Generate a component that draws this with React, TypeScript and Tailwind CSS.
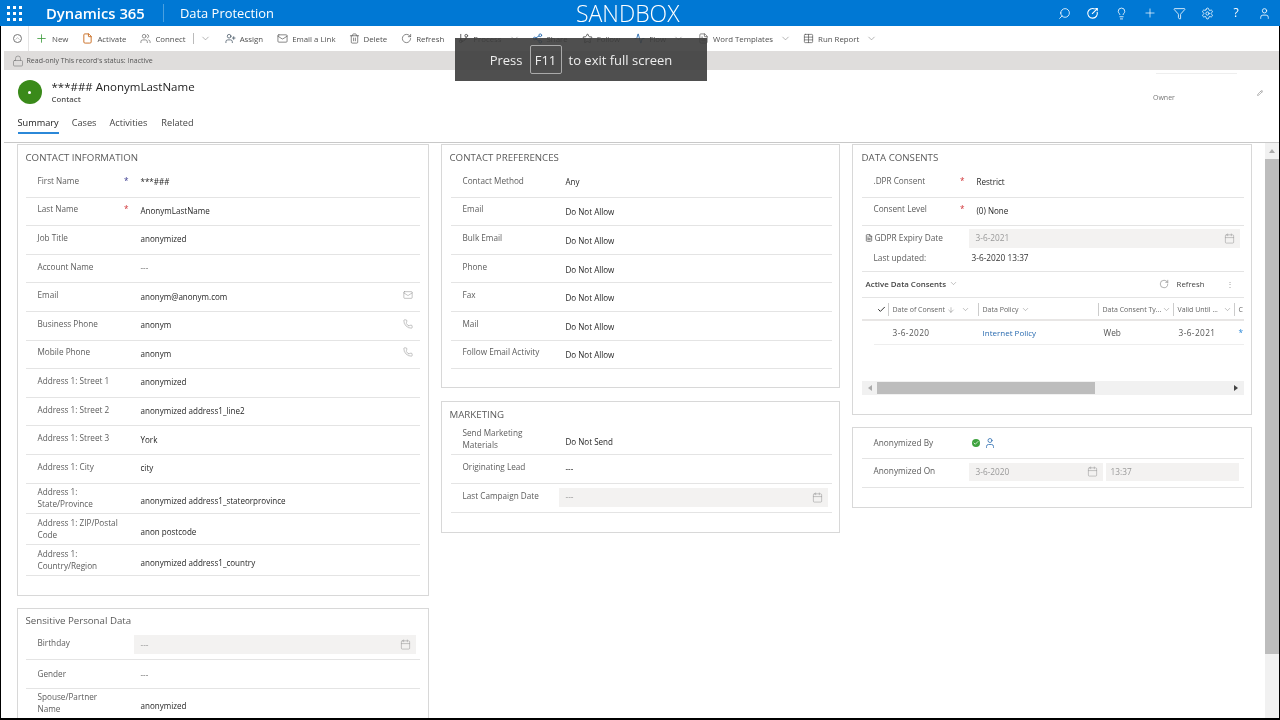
import {
  Activity,
  ArrowDown,
  Calendar,
  Check,
  ChevronDown,
  ChevronUp,
  File,
  FileText,
  Filter,
  GitBranch,
  Lightbulb,
  Lock,
  Mail,
  Pencil,
  Phone,
  Plus,
  RotateCw,
  Search,
  Settings,
  Share2,
  Star,
  Table,
  Trash2,
  User,
  UserPlus,
  Users,
} from "lucide-react";
import type { ReactNode } from "react";

const toolbarItems = [
  { icon: <Plus className="w-[13px] h-[13px] text-[#3b9a3b]" strokeWidth={1.5} />, label: "New", cls: "ml-[6px]" },
  { icon: <File className="w-[11px] h-[11px] text-[#c8691c]" />, label: "Activate", cls: "ml-[14px]" },
  { icon: <Users className="w-[11px] h-[11px] text-[#666]" strokeWidth={1.5} />, label: "Connect", cls: "ml-[14px]" },
];

const toolbarRest = [
  { icon: <UserPlus className="w-[11px] h-[11px] text-[#345]" strokeWidth={1.5} />, label: "Assign", cls: "ml-[14px]" },
  { icon: <Mail className="w-[11px] h-[11px] text-[#555]" strokeWidth={1.5} />, label: "Email a Link", cls: "ml-[14px]" },
  { icon: <Trash2 className="w-[11px] h-[11px] text-[#555]" strokeWidth={1.5} />, label: "Delete", cls: "ml-[13px]" },
  { icon: <RotateCw className="w-[11px] h-[11px] text-[#555]" strokeWidth={1.5} />, label: "Refresh", cls: "ml-[14px]" },
  { icon: <GitBranch className="w-[11px] h-[11px] text-[#555]" />, label: "Process", chevron: true, cls: "ml-[14px]" },
  { icon: <Share2 className="w-[11px] h-[11px] text-[#2b6cb0]" />, label: "Share", cls: "ml-[12px]" },
  { icon: <Star className="w-[11px] h-[11px] text-[#555]" />, label: "Follow", cls: "ml-[14px]" },
  { icon: <Activity className="w-[11px] h-[11px] text-[#2b6cb0]" />, label: "Flow", chevron: true, cls: "ml-[14px]" },
  { icon: <FileText className="w-[11px] h-[11px] text-[#555]" strokeWidth={1.5} />, label: "Word Templates", chevron: true, cls: "ml-[14px]" },
  { icon: <Table className="w-[11px] h-[11px] text-[#555]" strokeWidth={1.5} />, label: "Run Report", chevron: true, cls: "ml-[12px]" },
];

function ToolButton({
  icon,
  label,
  chevron,
  cls,
}: {
  icon: ReactNode;
  label: string;
  chevron?: boolean;
  cls: string;
}) {
  return (
    <div className={`flex items-center gap-[4px] whitespace-nowrap ${cls}`}>
      {icon}
      <span>{label}</span>
      {chevron && <ChevronDown className="w-[11px] h-[11px] ml-[3px] text-[#777]" strokeWidth={1.2} />}
    </div>
  );
}

function Row({
  label,
  value,
  star,
  tall,
  low,
  center,
  muted,
  right,
}: {
  label: string;
  value: string;
  star?: "red" | "blue";
  tall?: boolean;
  low?: boolean;
  center?: boolean;
  muted?: boolean;
  right?: ReactNode;
}) {
  return (
    <div
      className={`flex items-center border-b border-[#e4e4e4] ${
        tall ? "h-[30.8px] pb-[1px]" : center ? "h-[28.6px]" : "h-[28.6px] pb-[4px]"
      }`}
    >
      <div className="w-[115px] shrink-0 flex justify-between pl-[12px] pr-[12px] text-[#5c5c5c] text-[8.2px] leading-[12px]">
        <span className="whitespace-pre-line">{label}</span>
        {star && (
          <span className={star === "red" ? "text-[#d13438]" : "text-[#3b3b8f]"}>*</span>
        )}
      </div>
      <div
        className={`flex-1 ${low || tall ? "pt-[6px]" : "pt-[3px]"} text-[8.05px] ${
          muted ? "text-[#777]" : "text-[#262626] font-medium"
        }`}
      >
        {value}
      </div>
      {right && <div className="pr-[7px]">{right}</div>}
    </div>
  );
}

function DateInput({ value, cls }: { value: string; cls: string }) {
  return (
    <div className={`h-[18.5px] bg-[#f3f2f1] flex items-center justify-between pl-[7px] pr-[5px] text-[#999] ${cls}`}>
      <span>{value}</span>
      <Calendar className="w-[11px] h-[11px] text-[#999]" strokeWidth={1.2} />
    </div>
  );
}

function InputRow({ label, value }: { label: string; value: string }) {
  return (
    <div className="flex items-start h-[28.6px] border-b border-[#e4e4e4] pt-[4px]">
      <div className="w-[108px] shrink-0 pl-[12px] pt-[2px] text-[#5c5c5c] text-[8.2px] leading-[12px]">{label}</div>
      <DateInput value={value} cls="flex-1 mr-[4px]" />
    </div>
  );
}

function Card({
  title,
  cls,
  titleCls,
  short,
  children,
}: {
  title?: string;
  cls?: string;
  titleCls?: string;
  short?: boolean;
  children: ReactNode;
}) {
  return (
    <section className={`border border-[#d8d8d8] ${cls ?? "px-[8px]"}`}>
      {title && (
        <h2
          className={`${short ? "h-[22.5px]" : "h-[24px]"} pt-[5.5px] text-[9.7px] leading-[14px] text-[#5a5a5a] ${
            titleCls ?? ""
          }`}
        >
          {title}
        </h2>
      )}
      {children}
    </section>
  );
}

const tableHeaders = [
  { label: "Date of Consent", w: "w-[90px]", sort: true },
  { label: "Data Policy", w: "w-[120px]" },
  { label: "Data Consent Ty...", w: "w-[75px]" },
  { label: "Valid Until ...", w: "w-[61px]" },
];

export default function App() {
  return (
    <div className="w-[1280px] h-[720px] overflow-hidden flex flex-col relative bg-white blur-[0.3px] text-[8.3px] leading-[12px] font-['Open_Sans',sans-serif]">
      {/* Top bar */}
      <header className="h-[26px] shrink-0 bg-[#0078d4] text-white flex items-center">
        <div className="w-[46px] pl-[7px]">
          <div className="grid grid-cols-3 gap-[3px] w-[15px]">
            {Array.from({ length: 9 }).map((_, i) => (
              <span key={i} className="w-[3px] h-[3px] bg-white" />
            ))}
          </div>
        </div>
        <span className="text-[14.8px] font-semibold w-[117px] whitespace-nowrap">Dynamics 365</span>
        <span className="w-[1px] h-[18px] bg-[#4aa0e0] mr-[16px]" />
        <span className="text-[12.9px] w-[396px] whitespace-nowrap">Data Protection</span>
        <span className="text-[23px] font-light leading-[26px] whitespace-nowrap">SANDBOX</span>
        <div className="ml-auto flex items-center gap-[15.5px] pr-[9px]">
          <Search className="w-[13px] h-[13px] -scale-x-100" strokeWidth={1.5} />
          <svg viewBox="0 0 14 14" className="w-[13px] h-[13px]" fill="none" stroke="currentColor" strokeWidth="1.2">
            <path d="M9.5 2.2A5.2 5.2 0 1 0 12 5.2" />
            <path d="M6.5 7.5 12 2M10 1.8h2.2V4" />
          </svg>
          <Lightbulb className="w-[13px] h-[13px]" strokeWidth={1.5} />
          <Plus className="w-[14px] h-[14px]" strokeWidth={1.2} />
          <Filter className="w-[13px] h-[13px]" strokeWidth={1.5} />
          <Settings className="w-[13px] h-[13px]" strokeWidth={1.5} />
          <span className="text-[12px] w-[13px] text-center">?</span>
          <User className="w-[13px] h-[13px]" strokeWidth={1.5} />
        </div>
      </header>

      <div className="flex-1 min-h-0 flex flex-col border-l-[1.5px] border-r-[1.5px] border-b-2 border-black">
        {/* Command bar */}
        <div className="h-[25px] shrink-0 flex items-center text-[7.85px] text-[#505050]">
          <div className="w-[28px] h-[25px] flex items-center justify-end pr-[6px] border-r border-[#e4e4e4]">
            <ChevronUp className="w-[9px] h-[9px] rounded-full border border-[#777] text-[#777]" strokeWidth={1.5} />
          </div>
          {toolbarItems.map((item) => (
            <ToolButton key={item.label} {...item} />
          ))}
          <span className="w-[1px] h-[11px] bg-[#bbb] ml-[7px]" />
          <ChevronDown className="w-[11px] h-[11px] ml-[6px] text-[#777]" strokeWidth={1.2} />
          {toolbarRest.map((item) => (
            <ToolButton key={item.label} {...item} />
          ))}
        </div>

        {/* Read-only notice */}
        <div className="h-[19px] shrink-0 ml-[2.5px] bg-[#dfdddc] flex items-center pl-[8px] gap-[3px] text-[7px] text-[#555]">
          <Lock className="w-[12px] h-[12px] text-[#777]" strokeWidth={1.2} />
          <span>Read-only This record's status: Inactive</span>
        </div>

        {/* Record header */}
        <div className="h-[73px] shrink-0 ml-[2.5px] border-b-[1.5px] border-[#c8c8c8] flex flex-col pl-[14px] relative">
          <div className="flex items-start pt-[10px] h-[40px]">
            <div className="w-[24px] h-[24px] rounded-full bg-[#3a8a1a] text-white flex items-center justify-center">
              <span className="w-[3px] h-[3px] rounded-full bg-white" />
            </div>
            <div className="ml-[10px]">
              <div className="text-[11.5px] leading-[14px] text-[#222]">***### AnonymLastName</div>
              <div className="text-[7.8px] leading-[11px] font-semibold text-[#555]">Contact</div>
            </div>
            <div className="ml-auto w-[126px] pt-[9px] relative">
              <span className="absolute left-[3px] w-[81px] -top-[7px] border-t border-[#eee]" />
              <div className="flex justify-between items-center text-[7px] text-[#777]">
                <span className="pt-[3px]">Owner</span>
                <Pencil className="w-[6px] h-[6px] mr-[16px] -mt-[8px]" />
              </div>
            </div>
          </div>
          <nav className="flex mt-[4px] gap-[13px] text-[9.2px] text-[#444]">
            <span className="border-b-2 border-[#2b88d8] h-[20px] pt-[3px] text-[#222]">Summary</span>
            <span className="pt-[3px]">Cases</span>
            <span className="pt-[3px]">Activities</span>
            <span className="pt-[3px] ml-[1px]">Related</span>
          </nav>
        </div>

        {/* Body */}
        <div className="flex-1 min-h-0 flex overflow-hidden">
          <div className="flex-1 min-w-0 flex items-start gap-[12px] pl-[15.5px] pt-[1px]">
            <div className="w-[412px] flex flex-col gap-[12px]">
              <Card title="CONTACT INFORMATION">
                <Row label="First Name" value="***###" star="blue" />
                <Row label="Last Name" value="AnonymLastName" star="red" />
                <Row label="Job Title" value="anonymized" />
                <Row label="Account Name" value="---" muted />
                <Row
                  label="Email"
                  value="anonym@anonym.com"
                  right={<Mail className="w-[10px] h-[10px] text-[#888]" strokeWidth={1.2} />}
                />
                <Row
                  label="Business Phone"
                  value="anonym"
                  right={<Phone className="w-[10px] h-[10px] text-[#888]" strokeWidth={1.2} />}
                />
                <Row
                  label="Mobile Phone"
                  value="anonym"
                  right={<Phone className="w-[10px] h-[10px] text-[#888]" strokeWidth={1.2} />}
                />
                <Row label="Address 1: Street 1" value="anonymized" />
                <Row label="Address 1: Street 2" value="anonymized address1_line2" />
                <Row label="Address 1: Street 3" value="York" />
                <Row label="Address 1: City" value="city" />
                <Row tall label={"Address 1:\nState/Province"} value="anonymized address1_stateorprovince" />
                <Row tall label={"Address 1: ZIP/Postal\nCode"} value="anon postcode" />
                <Row tall label={"Address 1:\nCountry/Region"} value="anonymized address1_country" />
                <div className="h-[19px]" />
              </Card>
              <Card title="Sensitive Personal Data" short>
                <InputRow label="Birthday" value="---" />
                <Row center label="Gender" value="---" muted />
                <Row tall label={"Spouse/Partner\nName"} value="anonymized" />
              </Card>
            </div>

            <div className="w-[399px] flex flex-col gap-[13px]">
              <Card title="CONTACT PREFERENCES" cls="pl-[9px] pr-[7px]" titleCls="-ml-[1px]">
                <Row label="Contact Method" value="Any" />
                <Row low label="Email" value="Do Not Allow" />
                <Row low label="Bulk Email" value="Do Not Allow" />
                <Row low label="Phone" value="Do Not Allow" />
                <Row low label="Fax" value="Do Not Allow" />
                <Row low label="Mail" value="Do Not Allow" />
                <Row low label="Follow Email Activity" value="Do Not Allow" />
                <div className="h-[18px]" />
              </Card>
              <Card title="MARKETING" short cls="pl-[9px] pr-[7px]" titleCls="-ml-[1px]">
                <Row tall low label={"Send Marketing\nMaterials"} value="Do Not Send" />
                <Row label="Originating Lead" value="---" />
                <InputRow label="Last Campaign Date" value="---" />
                <div className="h-[19px]" />
              </Card>
            </div>

            <div className="w-[400px] flex flex-col gap-[12px]">
              <Card title="DATA CONSENTS" cls="pl-[9px] pr-[7px]">
                <Row label=".DPR Consent" value="Restrict" star="red" />
                <Row label="Consent Level" value="(0) None" star="red" />
                <div className="flex items-start pt-[3px] h-[25px]">
                  <div className="w-[107px] shrink-0 flex items-center pl-[3px] gap-[2px] pt-[3px] text-[#5c5c5c]">
                    <FileText className="w-[8px] h-[8px] text-[#444]" />
                    <span>GDPR Expiry Date</span>
                  </div>
                  <DateInput value="3-6-2021" cls="flex-1 mr-[4px]" />
                </div>
                <div className="flex h-[21px] items-start pt-[1px] border-b border-[#e4e4e4]">
                  <div className="w-[110px] pl-[12px] text-[#5c5c5c]">Last updated:</div>
                  <div className="text-[#333]">3-6-2020 13:37</div>
                </div>
                <div className="h-[26px] pb-[2px] flex items-center border-b border-[#e4e4e4] pl-[4px] pr-[10px]">
                  <span className="font-semibold text-[7.9px] text-[#444]">Active Data Consents</span>
                  <ChevronDown className="w-[9px] h-[9px] ml-[3px] text-[#777]" strokeWidth={1.2} />
                  <RotateCw className="w-[10px] h-[10px] ml-auto text-[#666]" strokeWidth={1.2} />
                  <span className="ml-[8px] text-[7.8px] text-[#444]">Refresh</span>
                  <span className="ml-[21px] text-[#999]">⋮</span>
                </div>
                <div className="h-[23px] pt-[2px] flex items-center border-b-2 border-[#e8e6e5] overflow-hidden text-[7px] text-[#666] whitespace-nowrap">
                  <div className="w-[27px] shrink-0 h-[13px] flex justify-end items-center pr-[2px] border-r border-[#ccc]">
                    <Check className="w-[9px] h-[9px] text-[#222]" strokeWidth={2.5} />
                  </div>
                  {tableHeaders.map((h) => (
                    <div key={h.label} className={`${h.w} shrink-0 h-[13px] flex items-center pl-[4px] pr-[2px] border-r border-[#ccc]`}>
                      <span>{h.label}</span>
                      {h.sort && <ArrowDown className="w-[8px] h-[8px] ml-[2px]" strokeWidth={1.2} />}
                      <ChevronDown
                        className={`w-[9px] h-[9px] text-[#777] ${
                          h.sort ? "ml-[6px]" : h.label === "Data Policy" ? "ml-[2px]" : "ml-auto"
                        }`}
                        strokeWidth={1.2}
                      />
                    </div>
                  ))}
                  <span className="pl-[4px]">C</span>
                </div>
                <div className="h-[24px] ml-[12px] flex items-center border-b border-[#eee] text-[#555]">
                  <span className="w-[105px] pl-[19px] shrink-0 tracking-[0.4px]">3-6-2020</span>
                  <span className="w-[120px] pl-[4px] shrink-0 text-[8px] text-[#2b6cb0]">Internet Policy</span>
                  <span className="w-[75px] pl-[5px] shrink-0">Web</span>
                  <span className="w-[61px] pl-[5px] shrink-0 tracking-[0.4px]">3-6-2021</span>
                  <span className="pl-[4px] text-[#2b88d8]">*</span>
                </div>
                <div className="h-[36px]" />
                <div className="h-[14px] bg-[#f1f1f1] flex items-center justify-between text-[#555]">
                  <span className="ml-[6px] w-0 h-0 border-y-[3px] border-y-transparent border-r-[4px] border-r-[#aaa]" />
                  <span className="h-[12px] w-[218px] bg-[#bdbdbd] mr-auto ml-[5px]" />
                  <span className="mr-[6px] w-0 h-0 border-y-[3px] border-y-transparent border-l-[4px] border-l-[#444]" />
                </div>
                <div className="h-[19px]" />
              </Card>
              <Card cls="pl-[9px] pr-[7px] pt-[2px]">
                <div className="flex items-center h-[29px] border-b border-[#e4e4e4] pb-[3px]">
                  <div className="w-[110px] pl-[12px] text-[#5c5c5c] shrink-0">Anonymized By</div>
                  <span className="w-[8px] h-[8px] rounded-full bg-[#3fa33f] flex items-center justify-center mr-[4px]">
                    <Check className="w-[6px] h-[6px] text-white" strokeWidth={3} />
                  </span>
                  <User className="w-[12px] h-[12px] text-[#2b6cb0]" strokeWidth={1.6} />
                </div>
                <div className="flex items-start h-[29px] border-b border-[#e4e4e4] pt-[3.5px]">
                  <div className="w-[107px] pl-[12px] pt-[2px] text-[#5c5c5c] shrink-0">Anonymized On</div>
                  <DateInput value="3-6-2020" cls="w-[134px]" />
                  <div className="ml-[3px] w-[133px] h-[18.5px] bg-[#f3f2f1] flex items-center pl-[5px] text-[#999]">13:37</div>
                </div>
                <div className="h-[19px]" />
              </Card>
            </div>
          </div>

          {/* Page scrollbar */}
          <div className="w-[14px] shrink-0 flex flex-col bg-[#f1f1f1]">
            <div className="h-[16px] flex items-center justify-center">
              <span className="w-0 h-0 border-x-[3px] border-x-transparent border-b-[4px] border-b-[#aaa]" />
            </div>
            <div className="h-[495px] bg-[#bdbdbd]" />
          </div>
        </div>
      </div>

      {/* Fullscreen hint */}
      <div className="absolute left-[455px] top-[38px] w-[252px] h-[43px] bg-[#3c3c3c]/90 text-[#eee] flex items-center justify-center text-[13px] gap-[7px]">
        <span>Press</span>
        <span className="border border-[#aaa] rounded-[2px] w-[32px] h-[29px] flex items-center justify-center">F11</span>
        <span>to exit full screen</span>
      </div>
    </div>
  );
}
